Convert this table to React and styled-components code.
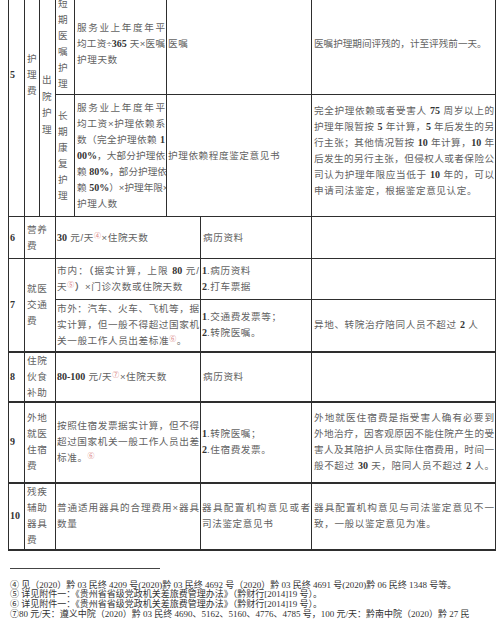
import React from 'react'
import styled, {createGlobalStyle} from 'styled-components'

//global
const Global = createGlobalStyle`
    html, body { margin: 0; padding: 0; background: #fff; }
    body { font-family: "Noto Sans CJK SC", sans-serif; }
`

//layout
const Page = styled.div`
    width: 499px;
    height: 621px;
    overflow: hidden;
    padding-left: 8px;
    box-sizing: border-box;
`

const Sheet = styled.table`
    margin-top: -68px;
    width: 487px;
    table-layout: fixed;
    border-collapse: collapse;
    font-family: "Liberation Sans", "Noto Sans CJK SC", sans-serif;
    color: #626262;
    font-size: 9.6px;
    line-height: 16px;
    letter-spacing: 0.6px;
`

const Col = styled.col`
    width: ${p => p.$w}px;
`

const Row = styled.tr`
    height: ${p => p.$h}px;
    & > td {
        border-top-width: ${p => p.$top || 1}px;
        border-bottom-width: ${p => p.$bottom || 1}px;
    }
`

const Cell = styled.td`
    border: 1px solid #2e2e2e;
    padding: 0 1px ${p => p.$pb || 0}px ${p => p.$pl ?? 1}px;
    vertical-align: middle;
    text-align: left;
    word-break: break-all;
    overflow: hidden;
`

const Narrow = styled(Cell)`
    padding: 0 1px 0 2px;
    line-height: ${p => p.$lh || 16}px;
`

const Ln = styled.div`
    white-space: nowrap;
    letter-spacing: ${p => p.$ls ?? (p.$j ? 0 : 0.6)}px;
    text-align: ${p => p.$j ? 'justify' : 'left'};
    text-align-last: ${p => p.$j ? 'justify' : 'auto'};
`

const Num = styled.span`
    font-family: "Liberation Serif", serif;
    font-weight: bold;
    font-size: 10px;
    letter-spacing: 0;
    color: #333;
`

const Mark = styled.sup`
    color: #d98080;
    font-family: "Noto Sans CJK SC", sans-serif;
    font-size: 7px;
    line-height: 0;
    vertical-align: 3px;
`

//footnotes
const Notes = styled.div`
    margin-top: 17px;
`

const Rule = styled.div`
    width: 150px;
    height: 1px;
    margin-left: 2px;
    background: #444;
`

const Foot = styled.div`
    margin-top: 12px;
    padding-left: 2px;
    font-family: "Liberation Serif", "Noto Sans CJK SC", serif;
    font-size: 9px;
    line-height: 9.8px;
    color: #333;
    white-space: nowrap;
`

const App = () => {

    return (
        <Page>
            <Global/>
            <Sheet>
                <colgroup>
                    <Col $w={16}/>
                    <Col $w={15}/>
                    <Col $w={16}/>
                    <Col $w={19}/>
                    <Col $w={92}/>
                    <Col $w={34}/>
                    <Col $w={111}/>
                    <Col $w={184}/>
                </colgroup>
                <tbody>
                    <Row $h={61}>
                        <Cell rowSpan={3}><Num>5</Num></Cell>
                        <Narrow rowSpan={3}>护理费</Narrow>
                        <Cell colSpan={2}>住院护理</Cell>
                        <Cell>护工人数×护工工资标准</Cell>
                        <Cell colSpan={2}>护理费发票</Cell>
                        <Cell></Cell>
                    </Row>
                    <Row $h={101}>
                        <Narrow rowSpan={2} $lh={16.5}>出院护理</Narrow>
                        <Narrow>短期医嘱护理</Narrow>
                        <Cell $pl={2}>
                            <Ln $j>服务业上年度年平</Ln>
                            <Ln $j>均工资÷<Num>365</Num> 天×医嘱</Ln>
                            <Ln>护理天数</Ln>
                        </Cell>
                        <Cell colSpan={2}>医嘱</Cell>
                        <Cell $pl={2}>
                            <Ln $ls={0}>医嘱护理期间评残的，计至评残前一天。</Ln>
                        </Cell>
                    </Row>
                    <Row $h={122}>
                        <Narrow>长期康复护理</Narrow>
                        <Cell $pl={2}>
                            <Ln $j>服务业上年度年平</Ln>
                            <Ln $j>均工资×护理依赖系</Ln>
                            <Ln $j>数（完全护理依赖 <Num>1</Num></Ln>
                            <Ln $j><Num>00%</Num>，大部分护理依</Ln>
                            <Ln $j>赖 <Num>80%</Num>，部分护理依</Ln>
                            <Ln $j>赖 <Num>50%</Num>）×护理年限×</Ln>
                            <Ln>护理人数</Ln>
                        </Cell>
                        <Cell colSpan={2}>护理依赖程度鉴定意见书</Cell>
                        <Cell $pl={2} $pb={10}>
                            <Ln $j>完全护理依赖或者受害人 <Num>75</Num> 周岁以上的</Ln>
                            <Ln $j>护理年限暂按 <Num>5</Num> 年计算，<Num>5</Num> 年后发生的另</Ln>
                            <Ln $j>行主张；其他情况暂按 <Num>10</Num> 年计算，<Num>10</Num> 年</Ln>
                            <Ln $j>后发生的另行主张，但侵权人或者保险公</Ln>
                            <Ln $j>司认为护理年限应当低于 <Num>10</Num> 年的，可以</Ln>
                            <Ln>申请司法鉴定，根据鉴定意见认定。</Ln>
                        </Cell>
                    </Row>

                    <Row $h={42}>
                        <Cell><Num>6</Num></Cell>
                        <Narrow colSpan={2}>营养费</Narrow>
                        <Cell colSpan={3}><Num>30</Num> 元/天<Mark>④</Mark>×住院天数</Cell>
                        <Cell $pl={2}>病历资料</Cell>
                        <Cell></Cell>
                    </Row>

                    <Row $h={41}>
                        <Cell rowSpan={2}><Num>7</Num></Cell>
                        <Narrow rowSpan={2} colSpan={2}>就医交通费</Narrow>
                        <Cell colSpan={3}>
                            <Ln $j>市内：<b>（</b>据实计算，上限 <Num>80</Num> 元/</Ln>
                            <Ln>天<Mark>⑤</Mark><b>）</b>×门诊次数或住院天数</Ln>
                        </Cell>
                        <Cell>
                            <Ln><Num>1</Num>.病历资料</Ln>
                            <Ln><Num>2</Num>.打车票据</Ln>
                        </Cell>
                        <Cell></Cell>
                    </Row>
                    <Row $h={52}>
                        <Cell colSpan={3}>
                            <Ln $j>市外：汽车、火车、飞机等，据</Ln>
                            <Ln $j>实计算，但一般不得超过国家机</Ln>
                            <Ln>关一般工作人员出差标准<Mark>⑥</Mark>。</Ln>
                        </Cell>
                        <Cell>
                            <Ln><Num>1</Num>.交通费发票等；</Ln>
                            <Ln><Num>2</Num>.转院医嘱。</Ln>
                        </Cell>
                        <Cell $pl={2}>异地、转院治疗陪同人员不超过 <Num>2</Num> 人</Cell>
                    </Row>

                    <Row $h={49} $top={2}>
                        <Cell><Num>8</Num></Cell>
                        <Narrow colSpan={2}>住院伙食补助</Narrow>
                        <Cell colSpan={3}><Num>80-100</Num> 元/天<Mark>⑦</Mark>×住院天数</Cell>
                        <Cell $pl={2}>病历资料</Cell>
                        <Cell></Cell>
                    </Row>

                    <Row $h={81} $top={2}>
                        <Cell><Num>9</Num></Cell>
                        <Narrow colSpan={2}>外地就医住宿费</Narrow>
                        <Cell colSpan={3}>
                            <Ln $j>按照住宿发票据实计算，但不得</Ln>
                            <Ln $j>超过国家机关一般工作人员出差</Ln>
                            <Ln>标准。<Mark>⑥</Mark></Ln>
                        </Cell>
                        <Cell>
                            <Ln><Num>1</Num>.转院医嘱；</Ln>
                            <Ln><Num>2</Num>.住宿费发票。</Ln>
                        </Cell>
                        <Cell $pl={2}>
                            <Ln $j>外地就医住宿费是指受害人确有必要到</Ln>
                            <Ln $j>外地治疗，因客观原因不能住院产生的受</Ln>
                            <Ln $j>害人及其陪护人员实际住宿费用，时间一</Ln>
                            <Ln $j>般不超过 <Num>30</Num> 天，陪同人员不超过 <Num>2</Num> 人。</Ln>
                        </Cell>
                    </Row>

                    <Row $h={67} $top={2} $bottom={2}>
                        <Cell><Num>10</Num></Cell>
                        <Narrow colSpan={2}>残疾辅助器具费</Narrow>
                        <Cell colSpan={3}>
                            <Ln $j>普通适用器具的合理费用×器具</Ln>
                            <Ln>数量</Ln>
                        </Cell>
                        <Cell>
                            <Ln $j>器具配置机构意见或者</Ln>
                            <Ln>司法鉴定意见书</Ln>
                        </Cell>
                        <Cell $pl={2}>
                            <Ln $j>器具配置机构意见与司法鉴定意见不一</Ln>
                            <Ln>致，一般以鉴定意见为准。</Ln>
                        </Cell>
                    </Row>
                </tbody>
            </Sheet>

            <Notes>
                <Rule/>
                <Foot>
                    <div>④ 见（2020）黔 03 民终 4209 号(2020)黔 03 民终 4692 号（2020）黔 03 民终 4691 号(2020)黔 06 民终 1348 号等。</div>
                    <div>⑤ 详见附件一：《贵州省省级党政机关差旅费管理办法》（黔财行[2014]19 号）。</div>
                    <div>⑥ 详见附件一：《贵州省省级党政机关差旅费管理办法》（黔财行[2014]19 号）。</div>
                    <div>⑦80 元/天：遵义中院（2020）黔 03 民终 4690、5162、5160、4776、4785 号，100 元/天：黔南中院（2020）黔 27 民</div>
                </Foot>
            </Notes>
        </Page>
    )
}

export default App
